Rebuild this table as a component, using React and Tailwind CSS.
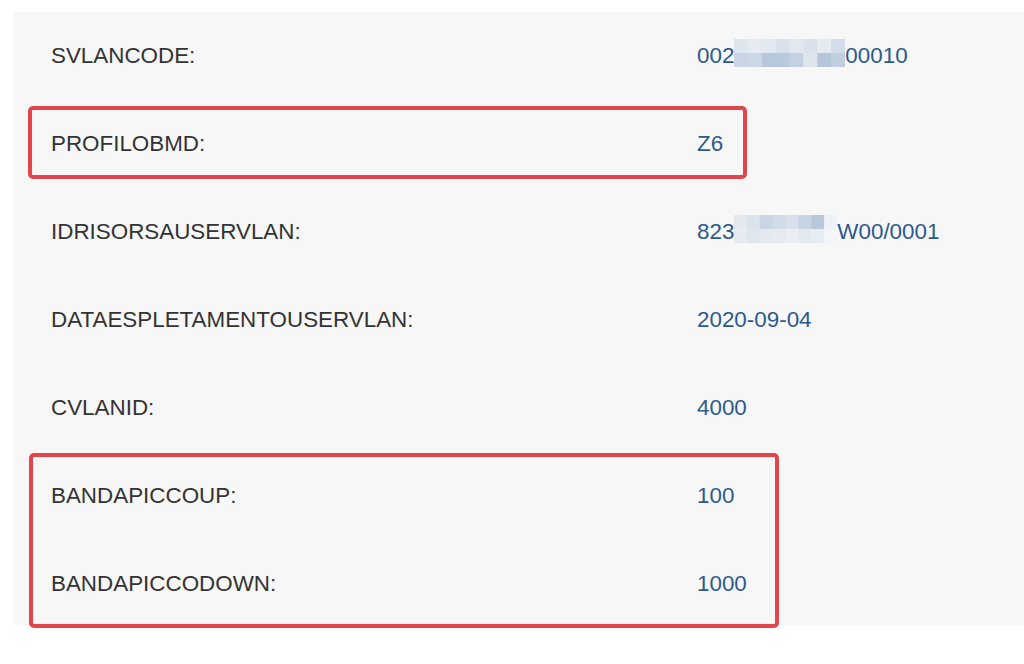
import React from 'react';

// pixelated redaction blocks (two rows of mosaic tiles)
function Mosaic({ width, top, bottom }) {
  const cols = top.length;
  const w = width / cols;
  return (
    <svg width={width} height={28} viewBox={`0 0 ${width} 28`} className="block shrink-0 mb-[7px]">
      {top.map((c, i) => (
        <rect key={'t' + i} x={i * w} y={0} width={w + 0.5} height={14} fill={c} />
      ))}
      {bottom.map((c, i) => (
        <rect key={'b' + i} x={i * w} y={14} width={w + 0.5} height={14} fill={c} />
      ))}
    </svg>
  );
}

const rows = [
  {
    label: 'SVLANCODE:',
    value: (
      <>
        <span>002</span>
        <Mosaic
          width={111}
          top={['#dde5ef', '#e6ebf2', '#e3e9f0', '#d8e1ec', '#e2e8ef', '#d9e2ec', '#e6ebf2', '#d3dde9']}
          bottom={['#c9d5e4', '#cdd8e6', '#b7c8dc', '#b9c9dd', '#c3d1e2', '#dfe5ec', '#b5c6db', '#c0cfe0']}
        />
        <span>00010</span>
      </>
    ),
  },
  { label: 'PROFILOBMD:', value: 'Z6' },
  {
    label: 'IDRISORSAUSERVLAN:',
    value: (
      <>
        <span>823</span>
        <Mosaic
          width={103}
          top={['#e4e9f0', '#dbe3ec', '#c9d5e3', '#d2dce8', '#d7e0eb', '#c6d3e2', '#b8c8db', '#eef1f5']}
          bottom={['#e6ebf2', '#dfe6ee', '#e4e9f0', '#e6ebf1', '#eaeef3', '#e2e8ef', '#e7ecf2', '#f3f5f8']}
        />
        <span>W00/0001</span>
      </>
    ),
  },
  { label: 'DATAESPLETAMENTOUSERVLAN:', value: '2020-09-04' },
  { label: 'CVLANID:', value: '4000' },
  { label: 'BANDAPICCOUP:', value: '100' },
  { label: 'BANDAPICCODOWN:', value: '1000' },
];

export default function App() {
  return (
    <div
      className="relative w-[1024px] h-[664px] bg-white overflow-hidden"
      style={{ fontFamily: '"Liberation Sans", Arial, sans-serif' }}
    >
      <div className="ml-[14px] mt-[12px] h-[613px] bg-[#f7f7f7] pl-[37px]">
        {rows.map((r) => (
          <div key={r.label} className="flex items-center h-[88px] text-[22.4px] leading-none">
            <div className="w-[646px] shrink-0 text-[#333333]">{r.label}</div>
            <div className="flex items-center text-[#2c5a8c]">{r.value}</div>
          </div>
        ))}
      </div>

      {/* annotation boxes */}
      <div className="absolute left-[28px] top-[106px] w-[719px] h-[73px] border-4 border-[#e0464b] rounded-[5px]" />
      <div className="absolute left-[29px] top-[453px] w-[750px] h-[175px] border-4 border-[#e0464b] rounded-[5px]" />
    </div>
  );
}
